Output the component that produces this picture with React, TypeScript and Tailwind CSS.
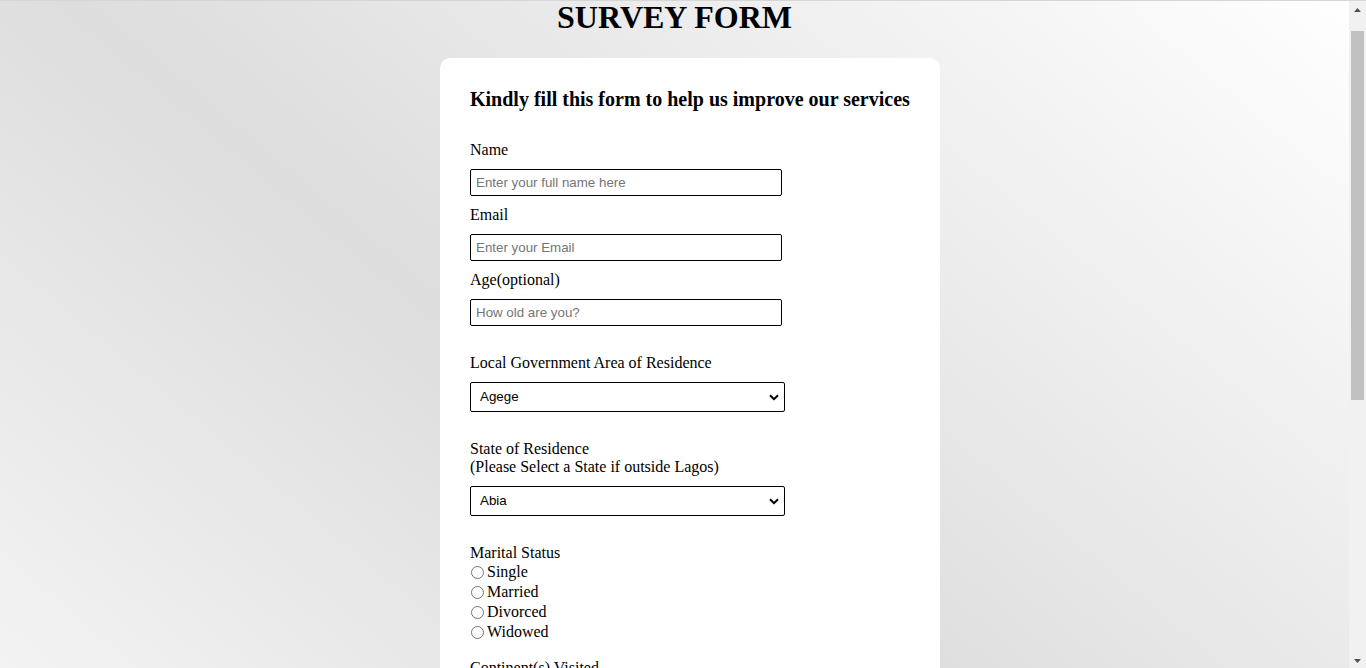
import { useState } from "react";

const lgas = [
  "Agege",
  "Ajeromi-Ifelodun",
  "Alimosho",
  "Amuwo-Odofin",
  "Apapa",
  "Badagry",
  "Epe",
  "Eti-Osa",
  "Ibeju-Lekki",
  "Ifako-Ijaiye",
  "Ikeja",
  "Ikorodu",
  "Kosofe",
  "Lagos Island",
  "Lagos Mainland",
  "Mushin",
  "Ojo",
  "Oshodi-Isolo",
  "Shomolu",
  "Surulere",
];

const states = [
  "Abia",
  "Adamawa",
  "Akwa Ibom",
  "Anambra",
  "Bauchi",
  "Bayelsa",
  "Benue",
  "Borno",
  "Cross River",
  "Delta",
  "Ebonyi",
  "Edo",
  "Ekiti",
  "Enugu",
  "FCT Abuja",
  "Gombe",
  "Imo",
  "Jigawa",
  "Kaduna",
  "Kano",
  "Katsina",
  "Kebbi",
  "Kogi",
  "Kwara",
  "Nasarawa",
  "Niger",
  "Ogun",
  "Ondo",
  "Osun",
  "Oyo",
  "Plateau",
  "Rivers",
  "Sokoto",
  "Taraba",
  "Yobe",
  "Zamfara",
];

const marital = ["Single", "Married", "Divorced", "Widowed"];
const continents = ["Africa", "Asia", "Europe", "North America", "South America", "Australia", "Antarctica"];

const inputCls =
  "block h-[27px] w-[312px] rounded-[2px] border border-black bg-white px-[5px] font-['Liberation_Sans',Arial,sans-serif] text-[13.333px] text-black outline-none placeholder:text-[#757575]";

function Select({ options }: { options: string[] }) {
  const [value, setValue] = useState(options[0]);
  return (
    <div className="relative mt-[10px] w-[315px]">
      <select
        value={value}
        onChange={(e) => setValue(e.target.value)}
        className="block h-[30px] w-[315px] appearance-none rounded-[2px] border border-black bg-white pl-[9px] font-['Liberation_Sans',Arial,sans-serif] text-[13.333px] text-black outline-none"
      >
        {options.map((o) => (
          <option key={o}>{o}</option>
        ))}
      </select>
      {/* dropdown chevron */}
      <svg
        className="pointer-events-none absolute right-[6px] top-[12px]"
        width="10"
        height="7"
        viewBox="0 0 10 7"
      >
        <path d="M1 1.2l4 4 4-4" fill="none" stroke="#000" strokeWidth="2" />
      </svg>
    </div>
  );
}

// page scrollbar as the browser draws it
function ScrollBar() {
  return (
    <div className="sticky top-0 flex h-screen w-[17px] shrink-0 flex-col bg-[#f1f1f1]">
      <div className="flex h-[17px] items-center justify-center">
        <svg width="7" height="4" viewBox="0 0 7 4">
          <path d="M0 4h7L3.5 0z" fill="#505050" />
        </svg>
      </div>
      <div className="flex-1 px-[2px] pt-[13px]">
        <div className="h-[369px] bg-[#c1c1c1]" />
      </div>
      <div className="flex h-[17px] items-center justify-center">
        <svg width="7" height="4" viewBox="0 0 7 4">
          <path d="M0 0h7L3.5 4z" fill="#505050" />
        </svg>
      </div>
    </div>
  );
}

export default function App() {
  return (
    <div className="flex min-h-screen border-t border-[#d6d6d6] bg-[linear-gradient(40deg,#f3f3f3,#dddddd_40%,#ffffff)] bg-fixed font-['Liberation_Serif','Times_New_Roman',serif] text-[16px] text-black">
      <div className="min-w-0 flex-1 pb-[25px]">
        <h1 className="text-center text-[32px] font-bold leading-[32px]">SURVEY FORM</h1>

        <div className="flex justify-center pl-[31px]">
          <form
            className="mt-[25px] w-[500px] rounded-[10px] bg-white px-[30px] pb-[40px] pt-[30px]"
            onSubmit={(e) => e.preventDefault()}
          >
            <h3 className="text-[20px] font-bold leading-[23px]">
              Kindly fill this form to help us improve our services
            </h3>

            <label className="mt-[30px] block leading-[18px]">Name</label>
            <input className={inputCls + " mt-[10px]"} placeholder="Enter your full name here" />

            <label className="mt-[10px] block leading-[18px]">Email</label>
            <input type="email" className={inputCls + " mt-[10px]"} placeholder="Enter your Email" />

            <label className="mt-[10px] block leading-[18px]">Age(optional)</label>
            <input type="number" className={inputCls + " mt-[10px]"} placeholder="How old are you?" />

            <label className="mt-[28px] block leading-[18px]">Local Government Area of Residence</label>
            <Select options={lgas} />

            <label className="mt-[28px] block leading-[18px]">
              State of Residence
              <br />
              (Please Select a State if outside Lagos)
            </label>
            <Select options={states} />

            <div className="mt-[27px] leading-[19px]">Marital Status</div>
            {marital.map((m) => (
              <label key={m} className="flex h-[20px] items-center leading-[18px]">
                <input type="radio" name="marital" className="m-0 ml-px mr-[3px] h-[13px] w-[13px]" />
                {m}
              </label>
            ))}

            <div className="mt-[16px] leading-[19px]">Continent(s) Visited</div>
            {continents.map((c) => (
              <label key={c} className="flex h-[20px] items-center leading-[18px]">
                <input type="checkbox" className="m-0 ml-px mr-[3px] h-[13px] w-[13px]" />
                {c}
              </label>
            ))}

            <div className="mt-[28px] leading-[18px]">How would you rate our services?</div>
            {["Excellent", "Good", "Fair", "Poor"].map((r) => (
              <label key={r} className="flex h-[20px] items-center leading-[18px]">
                <input type="radio" name="rating" className="m-0 ml-px mr-[3px] h-[13px] w-[13px]" />
                {r}
              </label>
            ))}

            <label className="mt-[28px] block leading-[18px]">Any comments or suggestions?</label>
            <textarea
              rows={6}
              className="mt-[10px] block w-[312px] rounded-[2px] border border-black p-[5px] font-['Liberation_Sans',Arial,sans-serif] text-[13.333px] outline-none placeholder:text-[#757575]"
              placeholder="Enter your comments here..."
            />

            <button
              type="submit"
              className="mt-[28px] block h-[32px] w-[120px] rounded-[4px] border border-black bg-[#efefef] font-['Liberation_Sans',Arial,sans-serif] text-[13.333px]"
            >
              Submit
            </button>
          </form>
        </div>
      </div>
      <ScrollBar />
    </div>
  );
}
